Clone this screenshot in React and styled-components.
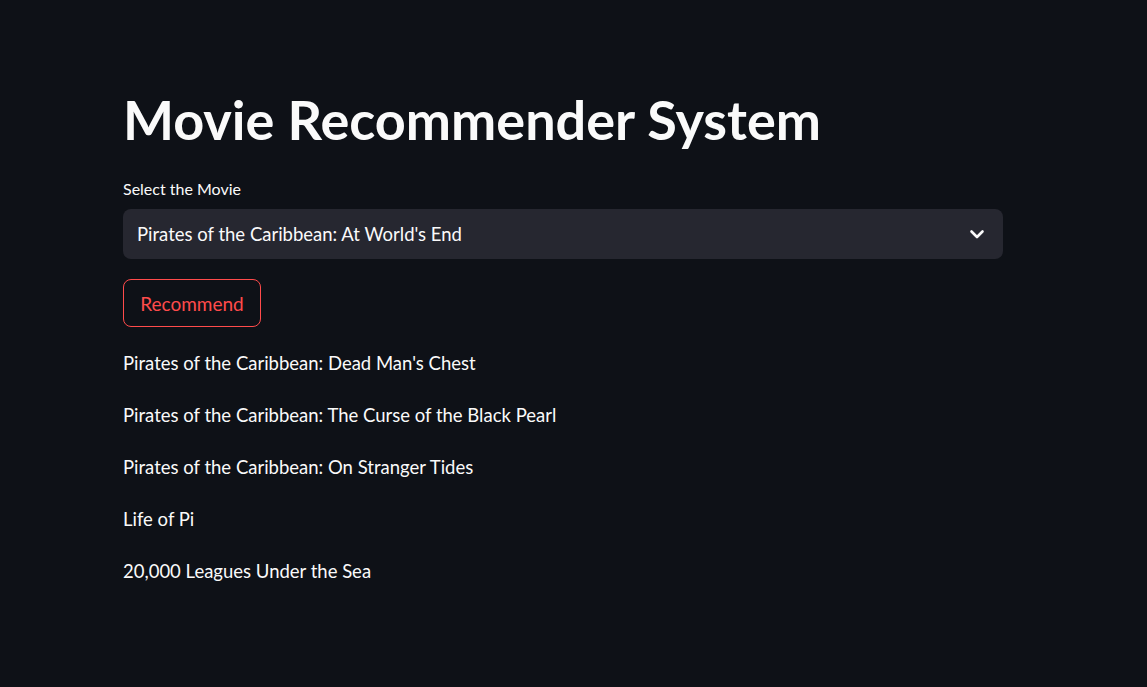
import styled, { createGlobalStyle } from 'styled-components';

const GlobalStyle = createGlobalStyle`
  html, body {
    margin: 0;
    padding: 0;
    background: #0e1117;
    color: #fafafa;
    font-family: "Lato", "Noto Sans", sans-serif;
  }
  * {
    box-sizing: border-box;
  }
`;

const recommendations = [
  "Pirates of the Caribbean: Dead Man's Chest",
  'Pirates of the Caribbean: The Curse of the Black Pearl',
  'Pirates of the Caribbean: On Stranger Tides',
  'Life of Pi',
  '20,000 Leagues Under the Sea',
];

const App = () => {
  return (
    <Page>
      <GlobalStyle />
      <Main>
        <Title>Movie Recommender System</Title>
        <Label>Select the Movie</Label>
        <Select>
          <span>Pirates of the Caribbean: At World's End</span>
          <Chevron viewBox="0 0 24 24">
            <path d="M6.5 9.5l5.5 5.5 5.5-5.5" />
          </Chevron>
        </Select>
        <Button>Recommend</Button>
        <List>
          {recommendations.map((movie) => (
            <Item key={movie}>{movie}</Item>
          ))}
        </List>
      </Main>
    </Page>
  );
};

export default App;

const Page = styled.div`
  min-height: 687px;
  background: #0e1117;
  padding: 87px 0 0 123px;
`;

const Main = styled.main`
  width: 880px;
  display: flex;
  flex-direction: column;
  align-items: flex-start;
`;

const Title = styled.h1`
  margin: 0;
  font-size: 54px;
  font-weight: 700;
  line-height: 66px;
  color: #fafafa;
`;

const Label = styled.label`
  margin-top: 25px;
  font-size: 16px;
  line-height: 22px;
  color: #fafafa;
`;

const Select = styled.div`
  margin-top: 9px;
  width: 100%;
  height: 50px;
  background: #262730;
  border-radius: 8px;
  display: flex;
  align-items: center;
  justify-content: space-between;
  padding: 0 14px 0 14px;
  font-size: 18.5px;
  color: #fafafa;
`;

const Chevron = styled.svg`
  width: 24px;
  height: 24px;
  fill: none;
  stroke: #fafafa;
  stroke-width: 2.6;
  stroke-linecap: round;
  stroke-linejoin: round;
`;

const Button = styled.button`
  margin-top: 20px;
  height: 48px;
  width: 138px;
  padding: 0;
  background: transparent;
  border: 1px solid rgb(255, 75, 75);
  border-radius: 8px;
  color: rgb(255, 75, 75);
  font-family: inherit;
  font-size: 19px;
  cursor: pointer;
`;

const List = styled.div`
  margin-top: 23px;
  display: flex;
  flex-direction: column;
  gap: 26px;
`;

const Item = styled.p`
  margin: 0;
  font-size: 18.5px;
  line-height: 26px;
  color: #fafafa;
`;
